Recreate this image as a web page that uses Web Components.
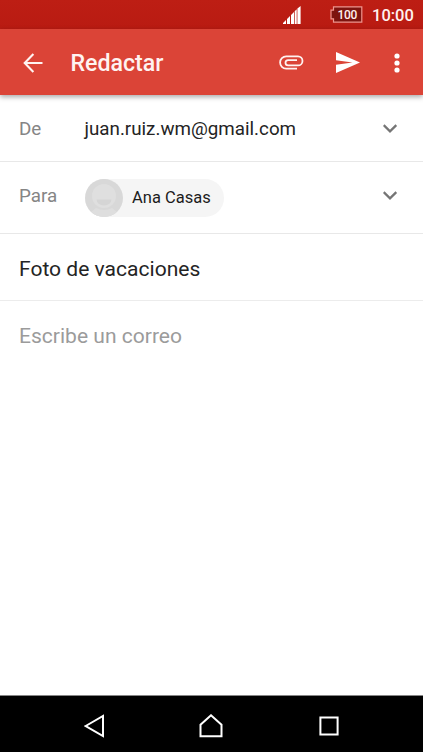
<!DOCTYPE html>
<html lang="es">
<head>
<meta charset="utf-8">
<title>Redactar</title>
<style>
html,body{margin:0;height:100%;background:#fff;overflow:hidden}
body{font-family:Roboto,"Liberation Sans",sans-serif}
</style>
</head>
<body>
<mail-compose></mail-compose>
<script>
const define = (name, html) => customElements.define(name, class extends HTMLElement {
  constructor() {
    super();
    this.attachShadow({mode: 'open'}).innerHTML = '<style>*{box-sizing:border-box}svg{display:block;flex:none}</style>' + html;
  }
});

define('status-bar', `
<style>
:host{display:flex;height:29px;flex:none;align-items:center;background:linear-gradient(#bd1e14,#b91b12);color:#fff;padding:0 9px 0 283px}
.time{font-size:16.5px;font-weight:500;line-height:20px;margin-left:9px;margin-top:2px;color:#fff2f0;white-space:nowrap}
.bat{position:relative;width:33px;height:17px;margin-left:29px}
.bat span{position:absolute;left:7.5px;top:1px;font-size:12px;font-weight:500;line-height:16px;letter-spacing:-.3px;color:#fff0ee}
</style>
<svg width="18" height="18" viewBox="0 0 18 18" fill="#fff"><path d="M0 18v-1l3-3v4zM4 18v-5l3-3v8zM8 18V9l3-3v12zM11.7 18V5.3l2-2V18zM14.4 18V2.6L17.6 0v18z"/></svg>
<div class="bat"><svg width="33" height="17" viewBox="0 0 33 17"><path d="M3.5.8h28.3v15.4H3.5v-3.4H1V4.2h2.5z" fill="#7d140f" stroke="#f0958e" stroke-width="1.2"/></svg><span>100</span></div>
<div class="time">10:00</div>`);

define('app-bar', `
<style>
:host{display:flex;height:66px;flex:none;align-items:center;background:#db4437;color:#fff;padding:1px 23px 0;box-shadow:0 2px 5px rgba(0,0,0,.34);position:relative;z-index:1}
.title{font-size:23.2px;font-weight:500;line-height:28px;margin-left:27.4px;color:#fff3f1;flex:1}
.clip{margin-right:31px}.send{margin-right:34px}
</style>
<svg width="20" height="20" viewBox="0 0 20 20" fill="none" stroke="#fff3f1" stroke-width="2.1"><path d="M19.5 10H2M10.4 1.1L1.7 10l8.7 8.9"/></svg>
<div class="title"><slot></slot></div>
<svg class="clip" width="25" height="15" viewBox="0 0 25 15" fill="none" stroke="#fff3f1" stroke-width="1.8"><path d="M18 13.6H7.2a6.1 6.1 0 0 1 0-12.2H19a4.5 4.5 0 0 1 0 9H9.1a2.6 2.6 0 0 1 0-5.2H18"/></svg>
<svg class="send" width="25" height="21" viewBox="0 0 25 21" fill="#fff"><path d="M1 0l24 10.5L1 21v-8.2l16.5-2.3L1 8.2z"/></svg>
<svg width="6" height="20" viewBox="0 0 6 20" fill="#fff"><circle cx="3" cy="3" r="2.6"/><circle cx="3" cy="10" r="2.6"/><circle cx="3" cy="17" r="2.6"/></svg>`);

define('field-row', `
<style>
:host{display:flex;align-items:center;border-bottom:1.5px solid #e8e8e8;padding:0 25px 0 19px;flex:none}
.label{width:65.5px;flex:none;font-size:18.8px;line-height:24px;color:#858585;padding-top:var(--text-top,0)}
.value{flex:1;font-size:18.78px;line-height:24px;color:#242424;padding-top:var(--text-top,0)}
svg{margin-bottom:var(--arrow-lift,0)}
</style>
<div class="label"><slot name="label"></slot></div>
<div class="value"><slot></slot></div>
<svg width="15" height="9" viewBox="0 0 15 9" fill="none" stroke="#757575" stroke-width="2.3"><path d="M.7 1.2L7 7.3l6.3-6.1"/></svg>`);

define('contact-chip', `
<style>
:host{display:flex;align-items:center;width:139.5px;height:38px;border-radius:19px;background:#f5f5f5;font-size:16.5px;line-height:20px;color:#1c1c1c;white-space:nowrap}
svg{margin:0 9.5px 0 0}
</style>
<svg width="38" height="38" viewBox="0 0 38 38"><clipPath id="c"><circle cx="19" cy="19" r="19"/></clipPath><g clip-path="url(#c)"><path d="M0 0h38v38H0z" fill="#d8d8d8"/><path d="M6 33l5-4q8 4 16 0l5 4-4 5H10z" fill="#dedede"/><circle cx="19" cy="17" r="12" fill="#dfdfdf"/><path d="M11.5 20.5h15a7.5 6 0 0 1-15 0z" fill="#d5d5d5"/></g></svg>
<span><slot></slot></span>`);

define('text-entry', `
<style>
:host{display:flex;align-items:center;height:67px;flex:none;padding:3px 19px 0;font-size:21.05px;line-height:26px;color:#242424;border-bottom:1px solid #ececec}
:host([placeholder]){color:#9b9b9b;border:0}
</style><span><slot></slot></span>`);

define('nav-bar', `
<style>
:host{display:flex;height:57px;flex:none;background:#000;border-top:1px solid #858585;align-items:center;padding:4px 84px 0 83.5px}
.home{margin-left:94.5px}.recent{margin-left:95.5px}
</style>
<svg width="21" height="24" viewBox="0 0 21 24" fill="none" stroke="#fff" stroke-width="2"><path d="M1.7 12L19 1.9v20.2z"/></svg>
<svg class="home" width="24" height="24" viewBox="0 0 24 24" fill="none" stroke="#fff" stroke-width="2"><path d="M1.5 22.3V10.7L12 1.3l10.5 9.4v11.6z"/></svg>
<svg class="recent" width="20" height="20" viewBox="0 0 20 20" fill="none" stroke="#fff" stroke-width="2"><path d="M1.4 1.4h17.2v17.2H1.4z"/></svg>`);

define('mail-compose', `
<style>
:host{display:flex;flex-direction:column;height:100vh;background:#fff}
.from{height:67px;--text-top:1px}
.to{height:72px;--arrow-lift:5px}
.to [slot=label]{margin-bottom:3px}
[slot=label]{display:block}
.space{flex:1}
</style>
<status-bar></status-bar>
<app-bar>Redactar</app-bar>
<field-row class="from"><span slot="label">De</span>juan.ruiz.wm@gmail.com</field-row>
<field-row class="to"><span slot="label">Para</span><contact-chip>Ana Casas</contact-chip></field-row>
<text-entry>Foto de vacaciones</text-entry>
<text-entry placeholder>Escribe un correo</text-entry>
<div class="space"></div>
<nav-bar></nav-bar>`);
</script>
</body>
</html>
